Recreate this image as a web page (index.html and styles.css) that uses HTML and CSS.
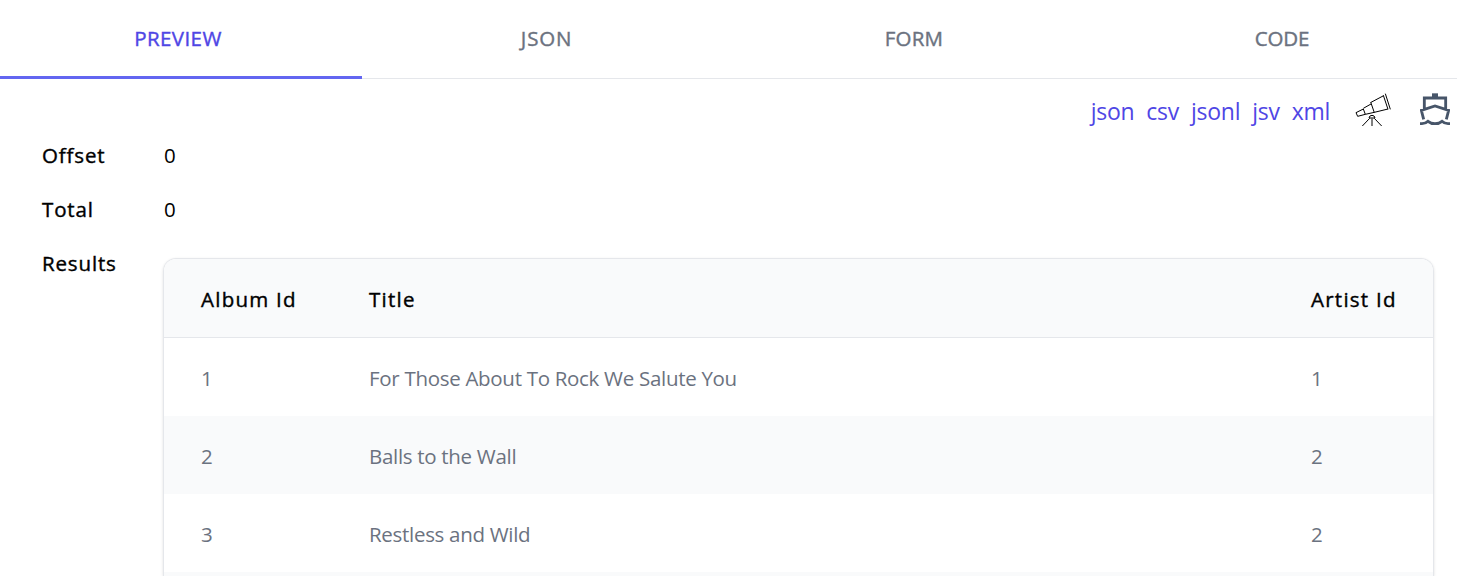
FILE: index.html
```html
<!DOCTYPE html>
<html lang="en">
<head>
<meta charset="utf-8">
<title>Preview</title>
<link rel="stylesheet" href="styles.css">
</head>
<body>
<nav class="tabs">
  <a class="tab active">PREVIEW</a>
  <a class="tab tab-json">JSON</a>
  <a class="tab">FORM</a>
  <a class="tab">CODE</a>
</nav>
<div class="toolbar">
  <div class="formats"><a>json</a><a>csv</a><a>jsonl</a><a>jsv</a><a>xml</a></div>
  <svg class="telescope" viewBox="45 39 111 102">
    <path d="M48 98 70 87 76 103 53 109ZM70 85 93 72M76 103 103 97M92 66 103 98M93 67 131 47M103 97 144 87M130 46 144 88M136 41 151 88M87 114Q88 106 96 106T105 114ZM89 115 67 138M96 116V138M103 115 125 138"/>
  </svg>
  <svg class="ship" viewBox="240 39 90 99">
    <path class="fill" d="M276 40h18v14h-18z"/>
    <path d="M253 87V54H317V87M251 118 244 91 285 78 326 91 319 118M240 131H246Q257 131 264 124 272 131 285 131T306 124Q313 131 324 131H330"/>
  </svg>
</div>
<main class="details">
  <div class="label">Offset</div><div class="value">0</div>
  <div class="label">Total</div><div class="value">0</div>
  <div class="label">Results</div>
  <div class="table">
    <div class="row head"><span>Album Id</span><span>Title</span><span>Artist Id</span></div>
    <div class="row"><span>1</span><span>For Those About To Rock We Salute You</span><span>1</span></div>
    <div class="row alt"><span>2</span><span>Balls to the Wall</span><span>2</span></div>
    <div class="row"><span>3</span><span>Restless and Wild</span><span>2</span></div>
    <div class="row alt last"></div>
  </div>
</main>
</body>
</html>
```

FILE: styles.css
```css
* { box-sizing: border-box; }
body {
  margin: 0;
  height: 576px;
  overflow: hidden;
  background: #fff;
  color: #000;
  font: 20.5px/30px "Open Sans", "Noto Sans", sans-serif;
}
.tabs {
  display: grid;
  grid-template-columns: 362px 368px 368px 1fr;
  height: 79px;
  border-bottom: 1px solid #e5e7eb;
}
.tab {
  height: 79px;
  padding: 23px 0 0;
  text-align: center;
  font-weight: 500;
  letter-spacing: .2px;
  -webkit-text-stroke: .4px currentColor;
  color: #6b7280;
}
.tab:first-child { padding-right: 6px; }
.tab.active { color: #4f46e5; border-bottom: 3px solid #6366f1; letter-spacing: .4px; }
.tab-json { letter-spacing: .8px; padding-left: 1px; }
.tab:last-child { padding-left: 9px; letter-spacing: -.2px; }
.toolbar {
  display: flex;
  justify-content: flex-end;
  height: 60px;
  padding: 14px 7px 0 0;
}
.formats {
  display: flex;
  gap: 12px;
  margin-right: 25px;
  padding-top: 3px;
  font-size: 23px;
  letter-spacing: -.27px;
  color: #4f46e5;
}
.toolbar svg { fill: none; }
.telescope { width: 37px; height: 34px; margin-right: 28px; stroke: #000; stroke-width: 3; }
.ship { width: 30px; height: 33px; stroke: #475569; stroke-width: 8.5; }
.ship .fill { fill: #475569; stroke: none; }
.details {
  display: grid;
  grid-template-columns: 121px 1271px;
  grid-template-rows: 54px 54px auto;
  padding: 1px 0 0 42px;
}
.label { font-weight: 500; letter-spacing: .85px; -webkit-text-stroke: .4px currentColor; }
.value { padding-left: 1px; }
.table {
  height: 318px;
  margin-top: 10px;
  border: 1px solid #e5e7eb;
  border-bottom: 0;
  border-radius: 13px 13px 0 0;
  overflow: hidden;
  box-shadow: 0 1px 3px rgba(0, 0, 0, .12);
}
.row {
  display: grid;
  grid-template-columns: 168px 942px 1fr;
  align-items: center;
  height: 78px;
  padding: 2px 0 0 37px;
  letter-spacing: -.3px;
  color: #6b7280;
}
.head {
  height: 79px;
  background: #f9fafb;
  border-bottom: 1px solid #e5e7eb;
  color: #000;
  font-weight: 500;
  letter-spacing: 1.25px;
  -webkit-text-stroke: .4px currentColor;
}
.alt { background: #f9fafb; }
.last { height: 4px; }
```
